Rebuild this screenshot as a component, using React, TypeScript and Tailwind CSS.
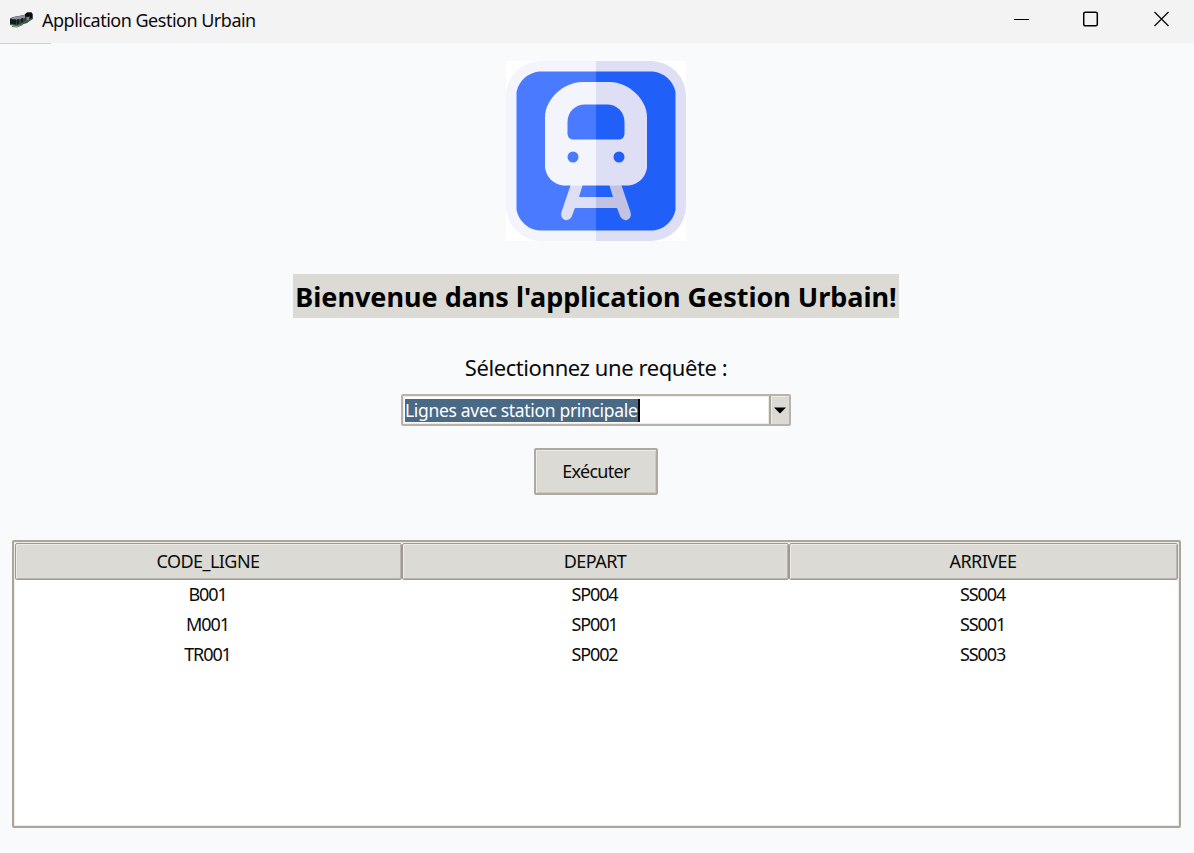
const columns = ['CODE_LIGNE', 'DEPART', 'ARRIVEE'];
const rows = [
  ['B001', 'SP004', 'SS004'],
  ['M001', 'SP001', 'SS001'],
  ['TR001', 'SP002', 'SS003'],
];

function AppIcon() {
  return (
    <svg width="24" height="18" viewBox="0 0 24 18" className="shrink-0">
      <path d="M1 7.500 L4 6 L15 4 L18 1.500 L22.500 1.500 L23.500 3 V8 L18 12 L8 15 L1 13.500Z" fill="#343a40" />
      <path d="M3 6.500 L16 4 V7 L10 8.500 L2 9Z" fill="#8b939b" />
      <path d="M1 8 L7 8.500 V13.500 L1 12.500Z" fill="#14191e" />
      <path d="M8 8.500 L10 8 V12.500 L8 13Z M12 7.500 L14 7 V11 L12 11.800Z" fill="#171c22" />
      <path d="M16 3.500 L18 1.500 H22.500 L23.500 3 V8 L21 9 V5 L17 6Z" fill="#07090b" />
      <path d="M17.500 6 H20 V9.500 H17.500Z" fill="#7d868d" />
      <path d="M1 13.500 L8 14.700 L15 11.500 L23 7.500" fill="none" stroke="#2f7d3a" strokeWidth="1.200" />
      <path d="M3 15.500 L8 16 L14 13.500" fill="none" stroke="#303a32" strokeWidth="0.700" />
    </svg>
  );
}

function Logo() {
  return (
    <svg width="180" height="180" viewBox="0 0 180 180" className="block">
      <rect width="180" height="180" fill="#fff" />
      <path d="M90 0 H35 A35 35 0 0 0 0 35 V145 A35 35 0 0 0 35 180 H90Z" fill="#f4f5fc" />
      <path d="M90 0 H145 A35 35 0 0 1 180 35 V145 A35 35 0 0 1 145 180 H90Z" fill="#dedff4" />
      <path d="M90 10.500 H33 A26 26 0 0 0 10.500 31 V149 A26 26 0 0 0 33 169.500 H90Z" fill="#4a7aff" />
      <path d="M90 10.500 H147 A26 26 0 0 1 169.500 31 V149 A26 26 0 0 1 147 169.500 H90Z" fill="#2160f8" />
      <path d="M65 123 H77 L73 136 H90 V147 H69 L65.500 156 Q63 160 59 159 Q54 157 55.500 151Z" fill="#dedff4" />
      <path d="M115 123 H103 L107 136 H90 V147 H111 L114.500 156 Q117 160 121 159 Q126 157 124.500 151Z" fill="#c2c2e3" />
      <path d="M90 21 H76 C58 21 39 38 39 56 V107 Q42 122 57 124.500 H90Z" fill="#f4f5fc" />
      <path d="M90 21 H104 C122 21 141 38 141 56 V107 Q138 122 123 124.500 H90Z" fill="#dedff4" />
      <path d="M90 43.500 H79 C69 43.500 61.500 51 61.500 61 V73 Q62 77.500 66 78.500 H90Z" fill="#4a7aff" />
      <path d="M90 43.500 H101 C111 43.500 118.500 51 118.500 61 V73 Q118 77.500 114 78.500 H90Z" fill="#2160f8" />
      <circle cx="67" cy="96" r="5.500" fill="#4a7aff" />
      <circle cx="113" cy="96" r="5.500" fill="#2160f8" />
    </svg>
  );
}

function TitleBar() {
  return (
    <header className="flex h-[43px] shrink-0 items-center justify-between bg-[#f3f3f3] pl-[9px]">
      <div className="flex items-center gap-[9px] pb-[4px]">
        <AppIcon />
        <span className="text-[18px] leading-6 tracking-[-0.5px] whitespace-nowrap">Application Gestion Urbain</span>
      </div>
      <div className="flex items-center gap-[53px] pr-[24px] pb-[5px]">
        <svg width="16" height="16" viewBox="0 0 16 16">
          <path d="M0 8.500 H15" stroke="#000" strokeWidth="1" />
        </svg>
        <svg width="16" height="16" viewBox="0 0 16 16">
          <rect x="0.700" y="1.200" width="13.600" height="13.600" rx="1.500" fill="none" stroke="#000" strokeWidth="1.500" />
        </svg>
        <svg width="16" height="16" viewBox="0 0 16 16" className="ml-[2px]">
          <path d="M0.500 1 L14.500 15 M14.500 1 L0.500 15" stroke="#111" strokeWidth="1.400" />
        </svg>
      </div>
    </header>
  );
}

function QueryForm() {
  return (
    <section className="flex w-[1192px] flex-col items-center">
      <label className="mt-[34px] h-[30px] text-[22px] leading-[30px] tracking-[-0.42px] whitespace-nowrap">
        Sélectionnez une requête :
      </label>
      <div className="mt-[12px] flex h-8 w-[390px] overflow-hidden rounded-[2px] border-2 border-[#b7b3aa] bg-white">
        <div className="flex flex-1 items-center border border-[#eeebe7] pl-px">
          <span className="h-[23px] border-r-2 border-black bg-[#4a6984] text-[17.500px] leading-[22px] tracking-[-0.320px] whitespace-nowrap text-white">
            Lignes avec station principale
          </span>
        </div>
        <button className="flex w-[20px] items-center justify-center border-l-2 border-[#aaa69d] bg-[#dcdad5] shadow-[inset_1px_1px_0_#eeebe7]">
          <svg width="12" height="7" viewBox="0 0 12 7">
            <path d="M0 0.500 H12 L6 6.500Z" fill="#000" />
          </svg>
        </button>
      </div>
      <button className="mt-[22px] h-[47px] w-[124px] rounded-[2px] border-2 border-[#aeaaa1] bg-[#dcdad5] text-[18px] leading-[43px] tracking-[-0.700px] shadow-[inset_1px_1px_0_#eeebe7,inset_-1px_-1px_0_#cbc8c1]">
        Exécuter
      </button>
    </section>
  );
}

function ResultTable() {
  return (
    <section className="mt-[45px] ml-[12px] h-[288px] w-[1169px] rounded-[2px] border-2 border-[#aaa69d] bg-white p-px shadow-[inset_0_0_0_1px_#eeebe7]">
      <div className="grid grid-cols-[387px_387px_389px] text-center text-[18px]">
        {columns.map((name) => (
          <div key={name} className="h-[37px] rounded-[2px] border border-[#9e9a91] bg-[#dcdad5] pr-px leading-[34px] tracking-[-0.550px] shadow-[inset_1px_1px_0_#eeebe7,inset_-1px_-1px_0_#bab6ae]">
            {name}
          </div>
        ))}
        {rows.flat().map((value) => (
          <div key={value} className="h-[30px] pr-[2px] leading-[28px] tracking-[-1.100px]">
            {value}
          </div>
        ))}
      </div>
    </section>
  );
}

export default function App() {
  return (
    <div className="flex h-[853px] w-[1194px] flex-col overflow-hidden bg-[#f8fafc] font-['Noto_Sans','Open_Sans',sans-serif] text-[#0b0b0b]">
      <TitleBar />
      <div className="h-px w-[51px] bg-[#cfcfcf]" />
      <main className="flex flex-col">
        <div className="mt-[17px] ml-[506px]">
          <Logo />
        </div>
        <h1 className="mt-[33px] ml-[293px] h-[44px] w-[606px] bg-[#dcdad5] text-center text-[27px] leading-[45px] font-bold tracking-[-0.020px] whitespace-nowrap text-black">
          Bienvenue dans l'application Gestion Urbain!
        </h1>
        <QueryForm />
        <ResultTable />
      </main>
    </div>
  );
}
